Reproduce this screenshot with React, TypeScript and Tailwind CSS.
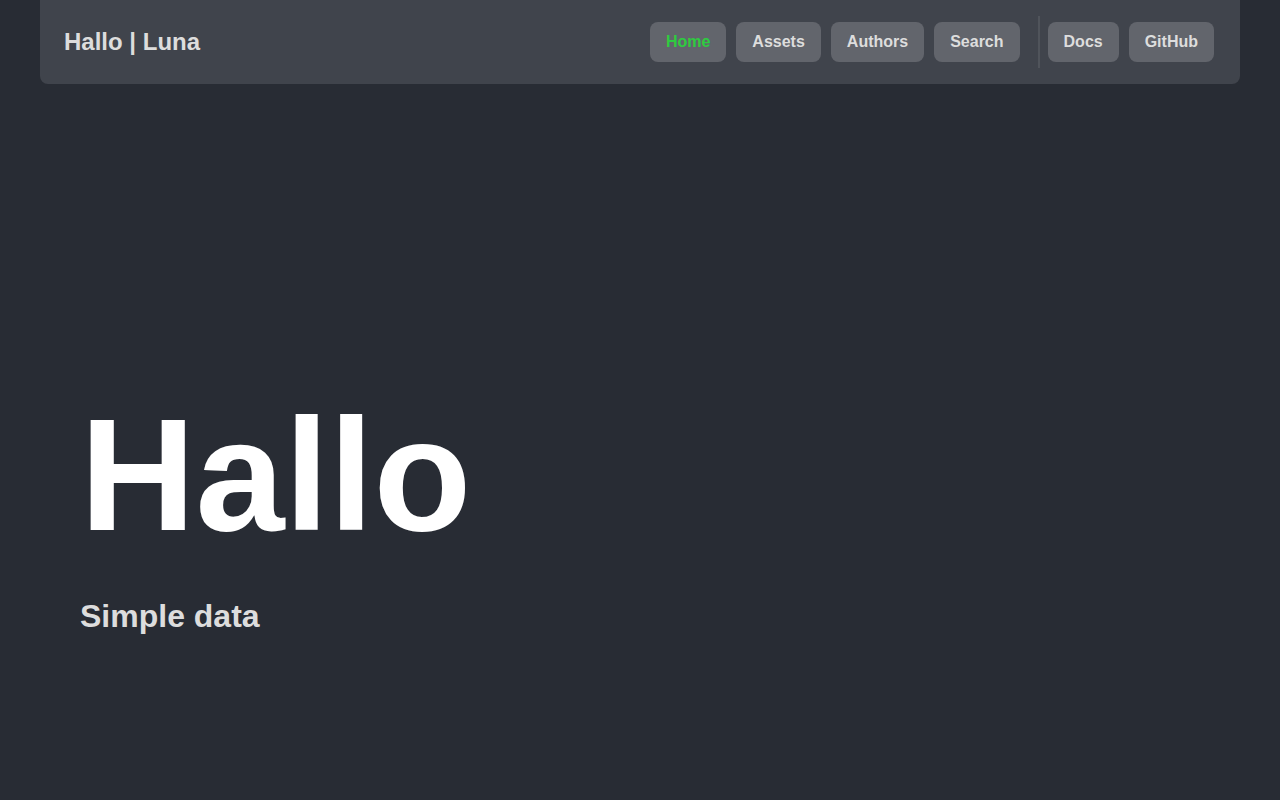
import React from "react";

const links = ["Home", "Assets", "Authors", "Search"];
const extra = ["Docs", "GitHub"];

function NavButton({ label, active }: { label: string; active?: boolean }) {
  return (
    <a
      href="#"
      className={`block px-4 py-2 rounded-lg bg-[#62656c] text-base leading-6 font-bold ${
        active ? "text-[#2ecc40]" : "text-[#dddddd]"
      }`}
    >
      {label}
    </a>
  );
}

export default function App() {
  return (
    <div className="min-h-screen bg-[#282c34] font-['Liberation_Sans',Arial,sans-serif]">
      {/* Header */}
      <header className="mx-10 flex items-center justify-between bg-[#40444c] rounded-b-lg pl-6 pr-[26px] py-4">
        <h1 className="text-2xl font-bold text-[#dddddd]">Hallo | Luna</h1>
        <nav className="flex items-center">
          <div className="flex items-center gap-2.5">
            {links.map((l) => (
              <NavButton key={l} label={l} active={l === "Home"} />
            ))}
          </div>
          <div className="ml-[18px] mr-2 w-0.5 h-[52px] bg-[#50545b]" />
          <div className="flex items-center gap-2.5">
            {extra.map((l) => (
              <NavButton key={l} label={l} />
            ))}
          </div>
        </nav>
      </header>

      {/* Hero */}
      <main className="px-20 pt-[311px]">
        <h2 className="text-[160px] leading-none font-bold text-white">Hallo</h2>
        <p className="mt-[45px] text-[32px] leading-none font-bold text-[#dddddd]">Simple data</p>
      </main>
    </div>
  );
}
